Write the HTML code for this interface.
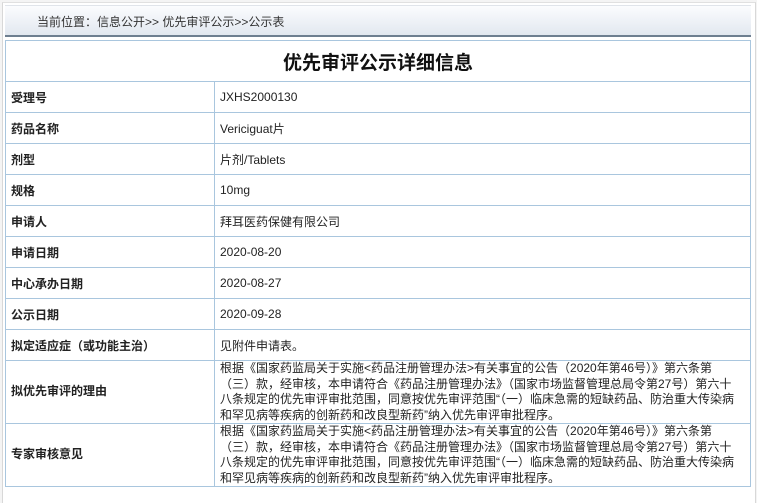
<!DOCTYPE html>
<html><head><meta charset="utf-8"><style>
body{margin:0;width:757px;height:493px;background:#f4f4f4;font-family:"Liberation Sans","Noto Sans CJK SC",sans-serif;font-size:12px;color:#222;overflow:hidden;position:relative}
.frame{position:absolute;left:2px;top:2px;width:752px;height:500px;background:#fff;border-left:1px solid #d8d8d8;border-right:1px solid #d8d8d8;border-top:1px solid #e0e0e0}
.bar{position:absolute;left:5px;top:5px;width:746px;height:29px;background:linear-gradient(#fbfcfe,#e2e8f0);border-bottom:2px solid #6e7f90;border-top:1px solid #e0e4ea}
.bar span{position:absolute;left:32px;top:7px;font-size:12px;color:#333}
table{position:absolute;left:5px;top:40px;width:746px;border-collapse:collapse;background:#fff}
td{border:1px solid #a9c6de;padding:0 5px;vertical-align:middle}
td.l{width:198px;font-weight:bold;color:#222}
.t{height:40px;text-align:center;font-size:19px;font-weight:bold;color:#111}
.r td{height:30px}
.m td{line-height:15.5px;height:62px;white-space:nowrap}
</style></head><body>
<div class="frame"></div>
<div class="bar"><span>当前位置：信息公开&gt;&gt; 优先审评公示&gt;&gt;公示表</span></div>
<table>
<tr><td colspan="2" class="t">优先审评公示详细信息</td></tr>
<tr class="r"><td class="l">受理号</td><td>JXHS2000130</td></tr>
<tr class="r"><td class="l">药品名称</td><td>Vericiguat片</td></tr>
<tr class="r"><td class="l">剂型</td><td>片剂/Tablets</td></tr>
<tr class="r"><td class="l">规格</td><td>10mg</td></tr>
<tr class="r"><td class="l">申请人</td><td>拜耳医药保健有限公司</td></tr>
<tr class="r"><td class="l">申请日期</td><td>2020-08-20</td></tr>
<tr class="r"><td class="l">中心承办日期</td><td>2020-08-27</td></tr>
<tr class="r" style="height:29px"><td class="l">公示日期</td><td>2020-09-28</td></tr>
<tr class="r"><td class="l">拟定适应症（或功能主治）</td><td>见附件申请表。</td></tr>
<tr class="m"><td class="l">拟优先审评的理由</td><td>根据《国家药监局关于实施&lt;药品注册管理办法&gt;有关事宜的公告（2020年第46号）》第六条第<br>（三）款，经审核，本申请符合《药品注册管理办法》（国家市场监督管理总局令第27号）第六十<br>八条规定的优先审评审批范围，同意按优先审评范围“（一）临床急需的短缺药品、防治重大传染病<br>和罕见病等疾病的创新药和改良型新药”纳入优先审评审批程序。</td></tr>
<tr class="m"><td class="l">专家审核意见</td><td>根据《国家药监局关于实施&lt;药品注册管理办法&gt;有关事宜的公告（2020年第46号）》第六条第<br>（三）款，经审核，本申请符合《药品注册管理办法》（国家市场监督管理总局令第27号）第六十<br>八条规定的优先审评审批范围，同意按优先审评范围“（一）临床急需的短缺药品、防治重大传染病<br>和罕见病等疾病的创新药和改良型新药”纳入优先审评审批程序。</td></tr>
</table>
</body></html>
